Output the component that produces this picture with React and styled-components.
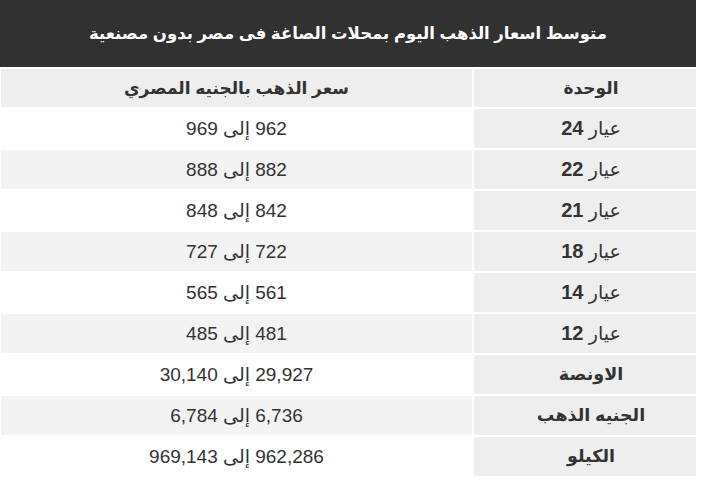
import styled, { createGlobalStyle } from "styled-components";

const GlobalStyle = createGlobalStyle`
  body {
    margin: 0;
    background: #fff;
    font-family: "Liberation Sans", Arial, "DejaVu Sans", sans-serif;
  }
`;

const Wrapper = styled.div`
  width: 696px;
  direction: rtl;
`;

const Title = styled.h2`
  margin: 0;
  height: 67px;
  background: #313131;
  color: #fff;
  font-size: 16.5px;
  font-weight: 700;
  display: flex;
  align-items: center;
  justify-content: center;
`;

const Table = styled.table`
  margin-top: 2px;
  width: 695px;
  border-collapse: separate;
  border-spacing: 0;
  table-layout: fixed;
`;

const Cell = styled.td`
  height: 39px;
  padding: 0;
  text-align: center;
  vertical-align: middle;
  color: #333;
  font-size: 19px;
  border-bottom: 2px solid #fff;
  background: ${({ $shade }) => ($shade ? "#f3f3f3" : "#fff")};
`;

const UnitCell = styled(Cell)`
  width: 210px;
  padding-left: 12px;
  border-left: 2px solid #fff;
  background: #eeeeee;
  font-weight: ${({ $bold }) => ($bold ? 700 : 400)};
  font-size: ${({ $bold }) => ($bold ? "17.5px" : "19px")};
`;

const HeadCell = styled(Cell).attrs({ as: "th" })`
  background: #eeeeee;
  font-weight: 700;
  font-size: 17px;
  height: 38px;
`;

const HeadUnit = styled(HeadCell)`
  width: 210px;
  padding-left: 12px;
  border-left: 2px solid #fff;
`;

const Karat = styled.b`
  font-weight: 700;
  font-size: 20px;
`;

const rows = [
  { karat: "24", price: "962 إلى 969" },
  { karat: "22", price: "882 إلى 888" },
  { karat: "21", price: "842 إلى 848" },
  { karat: "18", price: "722 إلى 727" },
  { karat: "14", price: "561 إلى 565" },
  { karat: "12", price: "481 إلى 485" },
  { label: "الاونصة", price: "29,927 إلى 30,140" },
  { label: "الجنيه الذهب", price: "6,736 إلى 6,784" },
  { label: "الكيلو", price: "962,286 إلى 969,143" },
];

export default function App() {
  return (
    <Wrapper>
      <GlobalStyle />
      <Title>متوسط اسعار الذهب اليوم بمحلات الصاغة فى مصر بدون مصنعية</Title>
      <Table>
        <thead>
          <tr>
            <HeadUnit>الوحدة</HeadUnit>
            <HeadCell>سعر الذهب بالجنيه المصري</HeadCell>
          </tr>
        </thead>
        <tbody>
          {rows.map((row, i) => (
            <tr key={i}>
              <UnitCell $bold={!row.karat}>
                {row.karat ? (
                  <>
                    عيار <Karat>{row.karat}</Karat>
                  </>
                ) : (
                  row.label
                )}
              </UnitCell>
              <Cell $shade={i % 2 === 1}>{row.price}</Cell>
            </tr>
          ))}
        </tbody>
      </Table>
    </Wrapper>
  );
}
